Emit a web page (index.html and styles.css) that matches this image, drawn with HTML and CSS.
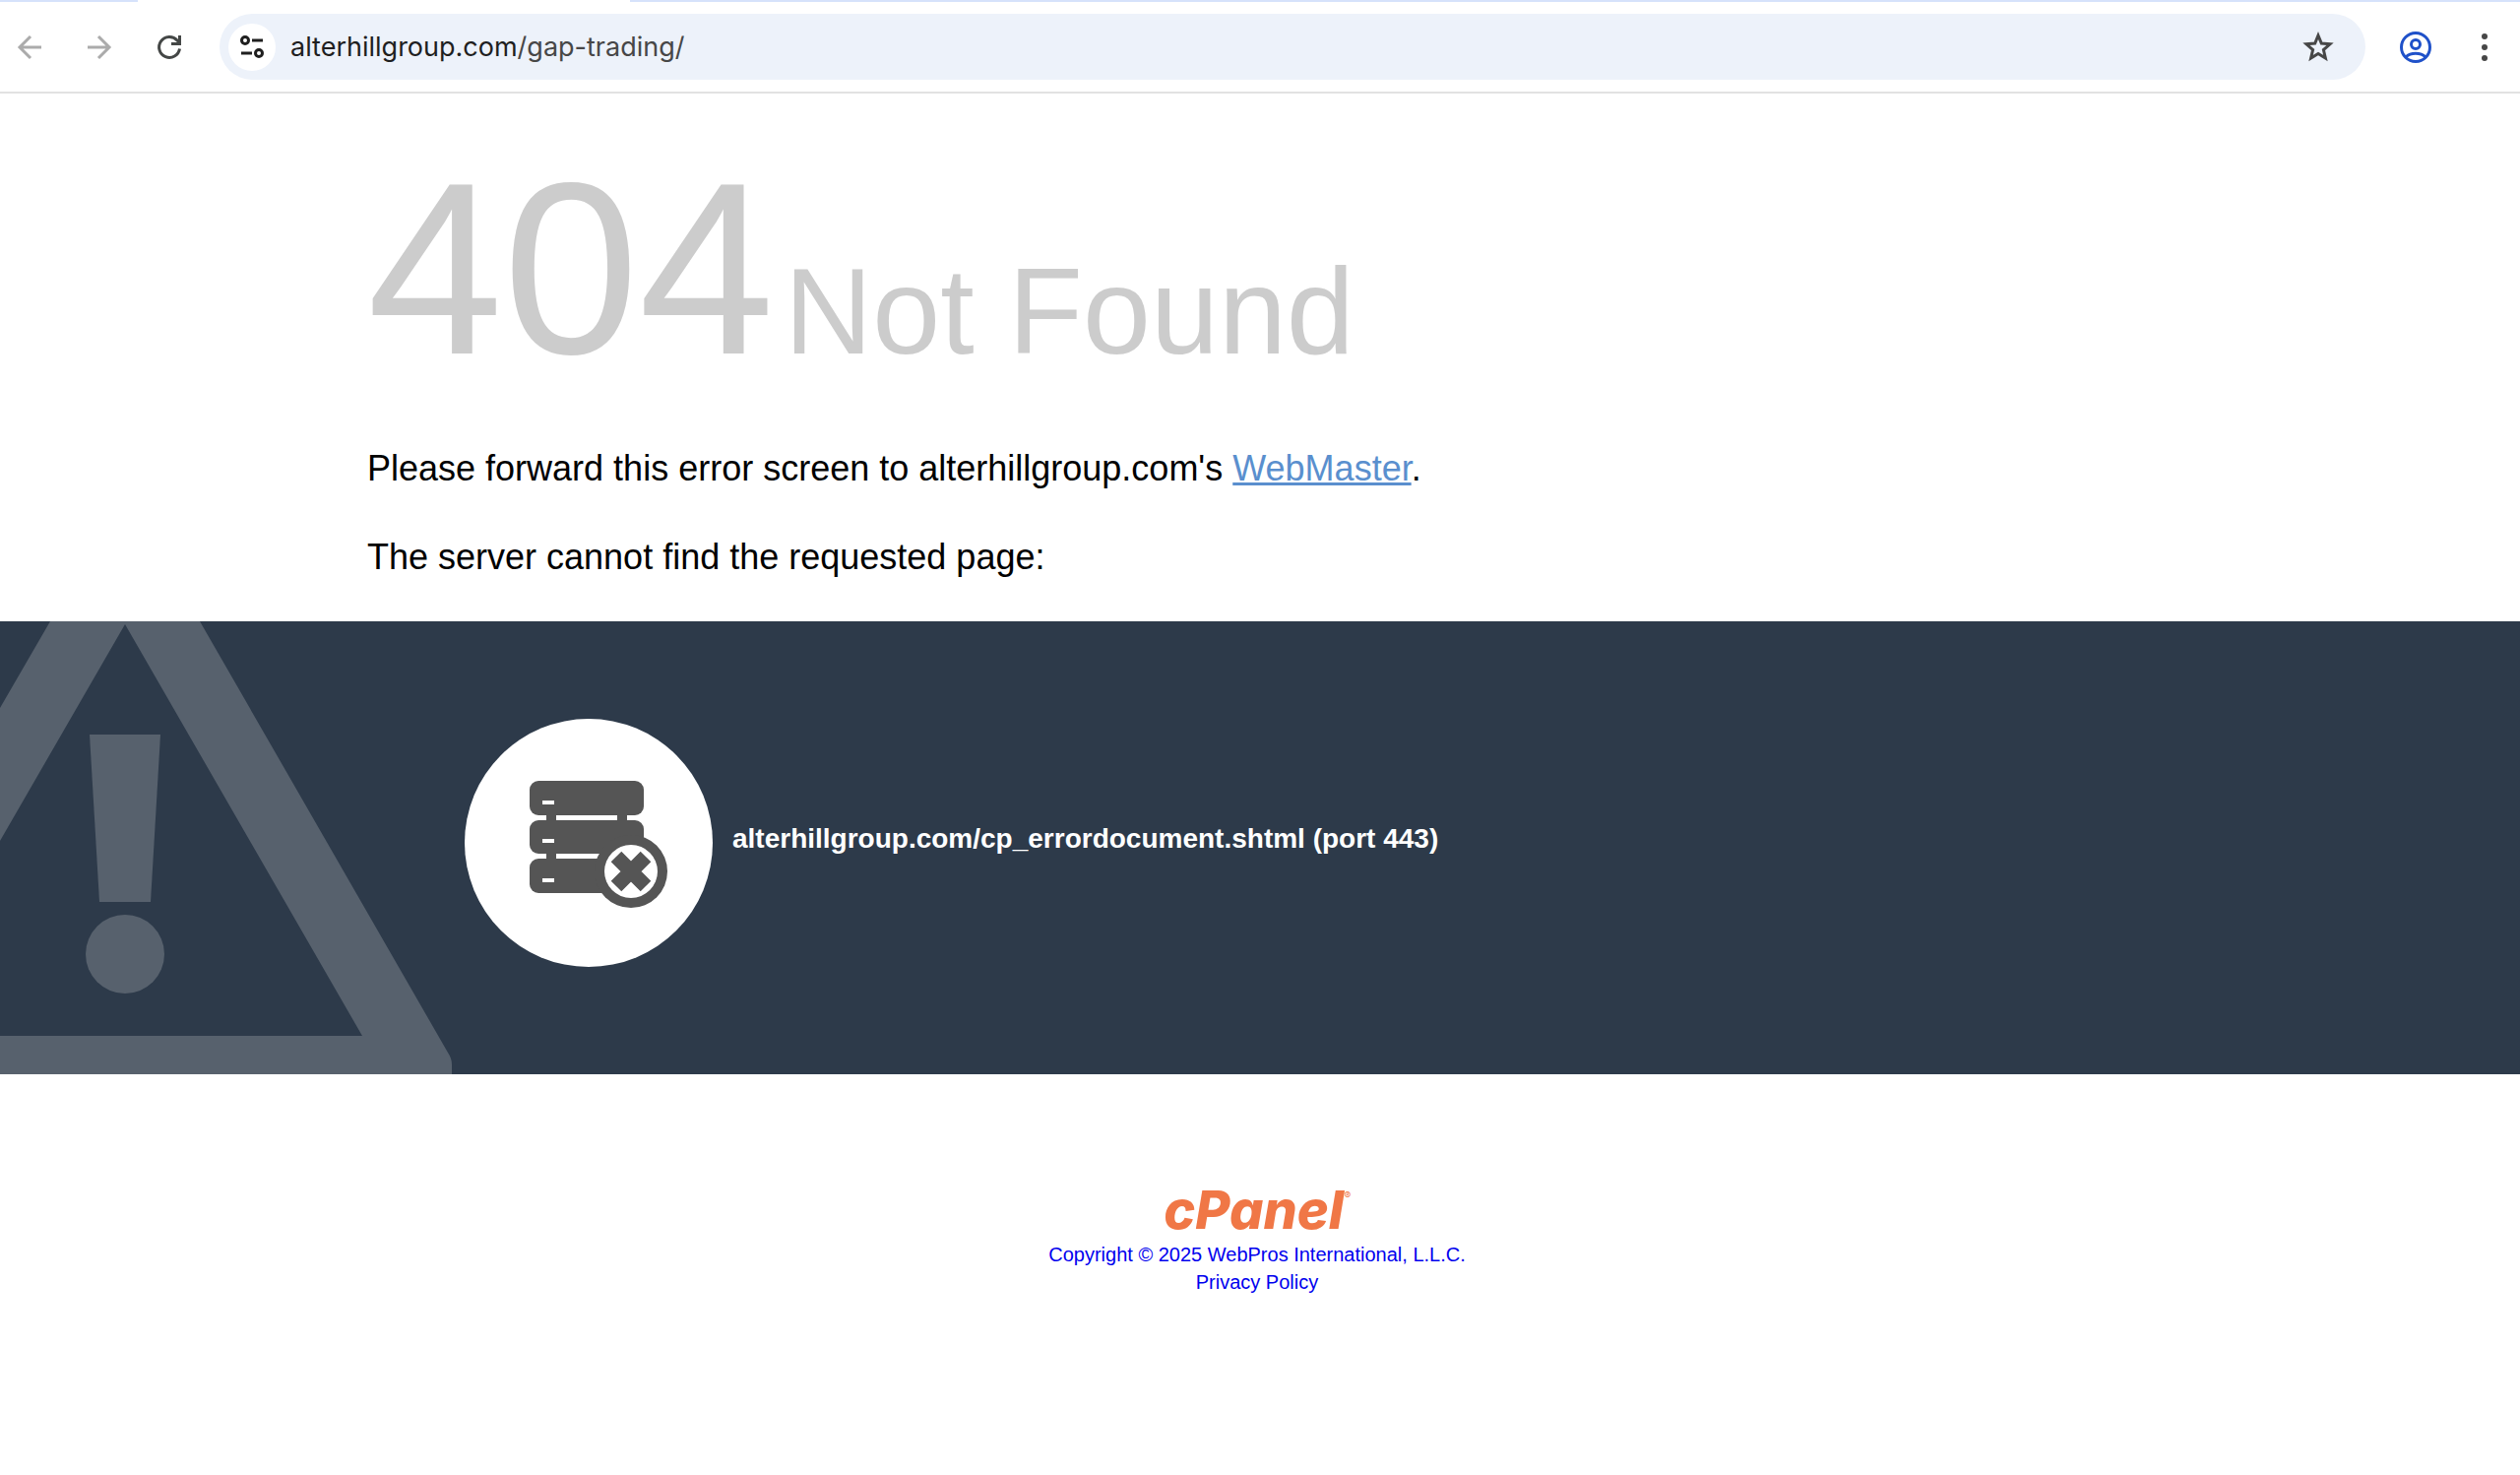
FILE: index.html
```html
<!DOCTYPE html>
<html lang="en">
<head>
  <meta charset="UTF-8" />
  <title>404 Not Found</title>
  <meta name="viewport" content="width=device-width, initial-scale=1.0" />
  <link rel="stylesheet" href="styles.css">
</head>
<body>
  <div class="tab-strip"><div class="active-tab"></div></div>
  <div class="toolbar">
    <button type="button" class="nav-button back" aria-label="Back">
      <svg width="28" height="28" viewBox="0 0 28 28"><path d="M26 14H4M15 3L4 14l11 11" /></svg>
    </button>
    <button type="button" class="nav-button forward" aria-label="Forward">
      <svg width="28" height="28" viewBox="0 0 28 28"><path d="M2 14h22M13 3l11 11-11 11" /></svg>
    </button>
    <button type="button" class="nav-button reload" aria-label="Reload">
      <svg width="28" height="28" viewBox="0 0 28 28"><path d="M24.500 15.500A10.500 10.500 0 1 1 22 7L24.500 9.500M24.500 2v8.500H16" /></svg>
    </button>
    <div class="address-bar">
      <button type="button" class="site-info" aria-label="View site information">
        <svg width="26" height="26" viewBox="0 0 26 26">
          <circle cx="6" cy="6" r="3.500" /><path d="M13 6h11M2 19h11" /><circle cx="20" cy="19" r="3.500" />
        </svg>
      </button>
      <a class="url" href="#">alterhillgroup.com<span>/gap-trading/</span></a>
      <button type="button" class="star" aria-label="Bookmark this tab">
        <svg width="32" height="32" viewBox="0 0 32 32"><path d="M16 4l3.300 8.100 8.700.7-6.600 5.700 2 8.500-7.400-4.500-7.400 4.500 2-8.500L4 12.800l8.700-.7z" /></svg>
      </button>
    </div>
    <button type="button" class="profile" aria-label="Profile">
      <svg width="32" height="32" viewBox="0 0 32 32">
        <circle cx="16" cy="16" r="14.500" /><circle cx="16" cy="13" r="4.500" /><path d="M6 26c5-5 15-5 20 0" />
      </svg>
    </button>
    <button type="button" class="menu" aria-label="Menu">
      <svg width="8" height="32" viewBox="0 0 8 32"><circle cx="4" cy="5" r="3" /><circle cx="4" cy="16" r="3" /><circle cx="4" cy="27" r="3" /></svg>
    </button>
  </div>

  <main>
    <div class="container">
      <h1><span class="status-code">404</span> <span class="status-reason">Not Found</span></h1>
      <p class="contact-info">Please forward this error screen to alterhillgroup.com's <a href="#">WebMaster</a>.</p>
      <p class="reason-text">The server cannot find the requested page:</p>
    </div>
    <section class="additional-info">
      <svg class="warning" width="460" height="460" viewBox="0 0 460 460">
        <path fill-rule="evenodd" d="M51 0H203L455 438Q459 444 459 450V460H0V421H368L127 3 0 223V88z" />
        <path d="M91 115h72l-10 170h-52z" />
        <circle cx="127" cy="338" r="40" />
      </svg>
      <div class="info-row">
        <svg class="server" width="252" height="252" viewBox="0 0 252 252">
          <circle class="disc" cx="126" cy="126" r="126" />
          <rect x="66" y="63" width="116" height="35" rx="9" />
          <rect x="66" y="103" width="116" height="34" rx="9" />
          <rect x="66" y="142" width="116" height="35" rx="9" />
          <path d="M83 95h10v50H83zM155 95h10v12h-10z" />
          <path class="disc" d="M79 83h12v4H79zM79 122h12v4H79zM79 162h12v4H79z" />
          <circle cx="169" cy="155" r="37" />
          <circle class="disc" cx="169" cy="155" r="27" />
          <path class="cross" d="M154 140l30 30M184 140l-30 30" />
        </svg>
        <strong>alterhillgroup.com/cp_errordocument.shtml (port 443)</strong>
      </div>
    </section>
  </main>

  <footer>
    <a class="logo" href="#">cPanel<sup>®</sup></a>
    <a href="#">Copyright © 2025 WebPros International, L.L.C.</a>
    <a href="#">Privacy Policy</a>
  </footer>
</body>
</html>
```
FILE: styles.css
```css
* {
  box-sizing: border-box;
}

body {
  margin: 0;
  font-family: Arial, "Liberation Sans", sans-serif;
  background-color: #fff;
  color: #000;
}

button {
  display: flex;
  align-items: center;
  justify-content: center;
  flex: none;
  padding: 0;
  border: none;
  background: none;
  cursor: pointer;
}

svg {
  display: block;
  flex: none;
}

.tab-strip {
  height: 2px;
  padding: 0 75% 0 140px;
  background-color: #d6e2fb;
}

.active-tab {
  height: 2px;
  background-color: #fff;
}

.toolbar {
  display: flex;
  align-items: center;
  height: 93px;
  padding: 0 32px 0 16px;
  border-bottom: 2px solid #e2e2e2;
}

.nav-button {
  width: 28px;
  margin-right: 43px;
}

.nav-button svg {
  fill: none;
  stroke: #444746;
  stroke-width: 3;
}

.back svg,
.forward svg {
  stroke: #ababab;
}

.address-bar {
  display: flex;
  flex: 1;
  align-items: center;
  height: 67px;
  margin-left: -6px;
  padding: 0 32px 0 9px;
  border-radius: 34px;
  background-color: #edf2fa;
}

.site-info {
  width: 48px;
  height: 48px;
  border-radius: 50%;
  background-color: #fff;
}

.site-info svg {
  fill: none;
  stroke: #1f1f1f;
  stroke-width: 3;
}

.url {
  flex: 1;
  margin-left: 15px;
  font-family: Inter, sans-serif;
  font-size: 27px;
  color: #1f1f1f;
  text-decoration: none;
}

.url span {
  color: #474747;
}

.star svg {
  fill: none;
  stroke: #474747;
  stroke-width: 3;
}

.profile {
  margin: 0 50px 0 35px;
}

.profile svg {
  fill: none;
  stroke: #1f51c9;
  stroke-width: 3;
}

.menu svg {
  fill: #474747;
}

.container {
  padding: 54px 14% 0 373px;
  font-size: 36px;
}

h1 {
  margin: 0;
  font-size: 36px;
  font-weight: normal;
  line-height: 1;
  color: #ccc;
}

.status-code {
  font-size: 248px;
}

.status-reason {
  font-size: 124px;
}

p {
  margin: 0;
  line-height: 42px;
}

.contact-info {
  padding: 58px 0 48px;
}

.contact-info a {
  color: #5a8fce;
}

.reason-text {
  padding-bottom: 44px;
}

.additional-info {
  display: grid;
  align-items: center;
  background-color: #2d3a4a;
  color: #fff;
}

.warning,
.info-row {
  grid-area: 1 / 1;
}

.warning {
  fill: #57616d;
}

.info-row {
  display: flex;
  align-items: center;
  gap: 20px;
  padding: 0 14% 10px 472px;
  font-size: 28px;
}

.info-row strong {
  padding-bottom: 8px;
}

.server {
  fill: #555;
}

.server .disc {
  fill: #fff;
}

.server .cross {
  stroke: #555;
  stroke-width: 15;
}

footer {
  display: flex;
  flex-direction: column;
  align-items: center;
  padding: 107px 6px 0 0;
  font-size: 20px;
  line-height: 28px;
}

footer a {
  color: #0000ee;
  text-decoration: none;
}

footer .logo {
  font-family: Inter, sans-serif;
  font-size: 54px;
  font-style: italic;
  font-weight: 800;
  line-height: 62px;
  color: #f07746;
}

.logo sup {
  font-size: 10px;
  font-weight: normal;
  line-height: 1;
  vertical-align: 30px;
}
```
